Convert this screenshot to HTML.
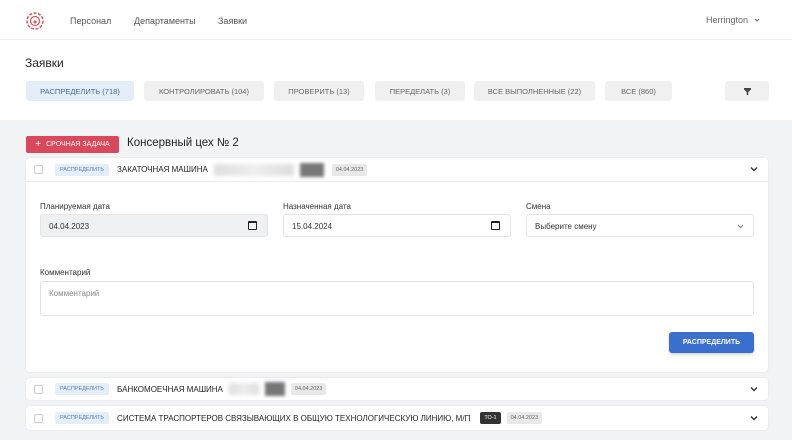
<!DOCTYPE html>
<html><head><meta charset="utf-8"><style>
*{box-sizing:border-box;margin:0;padding:0}
body{width:792px;height:440px;overflow:hidden;background:#fff;font-family:"Liberation Sans",sans-serif;color:#333;position:relative}
.abs{position:absolute}
.gray{background:#f2f3f5}
.tab{position:absolute;top:81px;height:20px;background:#f0f0f1;border-radius:3px;font-size:7.5px;color:#666;display:flex;align-items:center;justify-content:center}
.card{position:absolute;left:26px;width:742px;background:#fff;border-radius:4px;box-shadow:0 0 2px rgba(0,0,0,.08)}
.row{display:flex;align-items:center;height:22px;font-size:8px;color:#222}
.cb{width:9px;height:9px;border:1px solid #ccc;border-radius:2px;margin-left:8px;margin-right:12px}
.tag{background:#e3eef9;color:#5a7fae;font-size:5.5px;padding:3px 5px;border-radius:2px;margin-right:8px}
.date{background:#e8e8e8;color:#666;font-size:5.5px;padding:3px 4px;border-radius:2px}
.blur{height:12px;background:linear-gradient(90deg,#ddd,#eee,#ddd);filter:blur(2px)}
.chev{position:absolute;right:10px;top:8px}
.lbl{position:absolute;font-size:8px;color:#333}
.inp{position:absolute;height:23px;border:1px solid #e3e3e3;border-radius:3px;font-size:8px;color:#333;padding:7px 8px}
.cal{position:absolute;right:10px;top:6px;width:9px;height:9px;border:1.5px solid #222;border-top-width:2.5px;border-radius:1px}
</style></head><body>
<div class="abs" style="left:0;top:0;width:792px;height:40px;border-bottom:1px solid #eee;background:#fff"></div>
<svg class="abs" style="left:25px;top:10px" width="20" height="22" viewBox="0 0 20 22"><circle cx="10" cy="11" r="8" fill="none" stroke="#d9535f" stroke-width="1.5" stroke-dasharray="3 1.5"/><circle cx="10" cy="11" r="4.5" fill="none" stroke="#d9535f" stroke-width="1.2"/><circle cx="10" cy="12" r="1.5" fill="#d9535f"/></svg>
<div class="abs" style="left:70px;top:16px;font-size:9px;color:#555">Персонал</div>
<div class="abs" style="left:134px;top:16px;font-size:9px;color:#555">Департаменты</div>
<div class="abs" style="left:218px;top:16px;font-size:9px;color:#555">Заявки</div>
<div class="abs" style="left:706px;top:15px;font-size:9px;color:#666">Herrington</div>
<svg class="abs" style="left:754px;top:18px" width="6" height="4" viewBox="0 0 6 4"><path d="M1 1l2 2 2-2" fill="none" stroke="#666" stroke-width="1"/></svg>
<div class="abs" style="left:25px;top:56px;font-size:12px;color:#222">Заявки</div>
<div class="tab" style="left:26px;width:108px;background:#e3edf7;color:#4a6a92">РАСПРЕДЕЛИТЬ (718)</div>
<div class="tab" style="left:144px;width:120px">КОНТРОЛИРОВАТЬ (104)</div>
<div class="tab" style="left:274px;width:90px">ПРОВЕРИТЬ (13)</div>
<div class="tab" style="left:375px;width:90px">ПЕРЕДЕЛАТЬ (3)</div>
<div class="tab" style="left:474px;width:121px">ВСЕ ВЫПОЛНЕННЫЕ (22)</div>
<div class="tab" style="left:605px;width:67px">ВСЕ (860)</div>
<div class="tab" style="left:725px;width:44px"><svg width="7" height="7" viewBox="0 0 7 7"><path d="M0 0h7v1.5L4.3 4v3H2.7V4L0 1.5z" fill="#444"/></svg></div>
<div class="abs gray" style="left:0;top:120px;width:792px;height:320px"></div>
<div class="abs" style="left:26px;top:136px;width:93px;height:17px;background:#d9485b;border-radius:2px;color:#fff;font-size:7px;display:flex;align-items:center;justify-content:center"><b style="font-size:10px;margin-right:5px;font-weight:normal">+</b>СРОЧНАЯ ЗАДАЧА</div>
<div class="abs" style="left:127px;top:137px;font-size:11.5px;color:#222">Консервный цех № 2</div>
<div class="card" style="top:158px;height:214px">
<div class="row" style="border-bottom:1px solid #eee;height:24px"><div class="cb"></div><span class="tag">РАСПРЕДЕЛИТЬ</span>ЗАКАТОЧНАЯ МАШИНА<div class="blur" style="width:80px;margin:0 6px"></div><div style="width:24px;height:14px;background:#777;filter:blur(1.5px);margin-right:8px"></div><span class="date">04.04.2023</span></div>
<svg class="chev" width="8" height="6" viewBox="0 0 8 6"><path d="M1 1.5l3 3 3-3" fill="none" stroke="#333" stroke-width="1.4"/></svg>
<div class="lbl" style="left:14px;top:44px">Планируемая дата</div>
<div class="inp" style="left:14px;top:56px;width:228px;background:#eef0f2">04.04.2023<div class="cal"></div></div>
<div class="lbl" style="left:257px;top:44px">Назначенная дата</div>
<div class="inp" style="left:257px;top:56px;width:228px">15.04.2024<div class="cal"></div></div>
<div class="lbl" style="left:500px;top:44px">Смена</div>
<div class="inp" style="left:500px;top:56px;width:228px">Выберите смену<svg style="position:absolute;right:9px;top:9px" width="7" height="5" viewBox="0 0 7 5"><path d="M1 1l2.5 2.5L6 1" fill="none" stroke="#777" stroke-width="1"/></svg></div>
<div class="lbl" style="left:14px;top:110px">Комментарий</div>
<div class="inp" style="left:14px;top:123px;width:714px;height:35px;color:#888">Комментарий</div>
<div class="abs" style="left:643px;top:174px;width:85px;height:21px;background:#3a6fce;border-radius:3px;color:#fff;font-size:7px;font-weight:bold;display:flex;align-items:center;justify-content:center;box-shadow:0 2px 3px rgba(0,0,0,.15)">РАСПРЕДЕЛИТЬ</div>
</div>
<div class="card" style="top:378px;height:22px"><div class="row"><div class="cb"></div><span class="tag">РАСПРЕДЕЛИТЬ</span>БАНКОМОЕЧНАЯ МАШИНА<div class="blur" style="width:30px;margin:0 6px"></div><div style="width:20px;height:14px;background:#777;filter:blur(1.5px);margin-right:6px"></div><span class="date">04.04.2023</span></div><svg class="chev" width="8" height="6" viewBox="0 0 8 6"><path d="M1 1.5l3 3 3-3" fill="none" stroke="#333" stroke-width="1.4"/></svg></div>
<div class="card" style="top:406px;height:24px"><div class="row" style="height:24px"><div class="cb"></div><span class="tag">РАСПРЕДЕЛИТЬ</span>СИСТЕМА ТРАСПОРТЕРОВ СВЯЗЫВАЮЩИХ В ОБЩУЮ ТЕХНОЛОГИЧЕСКУЮ ЛИНИЮ, М/П<span style="background:#333;color:#fff;font-size:5.5px;padding:3px 4px;border-radius:2px;margin:0 6px 0 10px">ТО-1</span><span class="date">04.04.2023</span></div><svg class="chev" style="top:9px" width="8" height="6" viewBox="0 0 8 6"><path d="M1 1.5l3 3 3-3" fill="none" stroke="#333" stroke-width="1.4"/></svg></div>
</body></html>
